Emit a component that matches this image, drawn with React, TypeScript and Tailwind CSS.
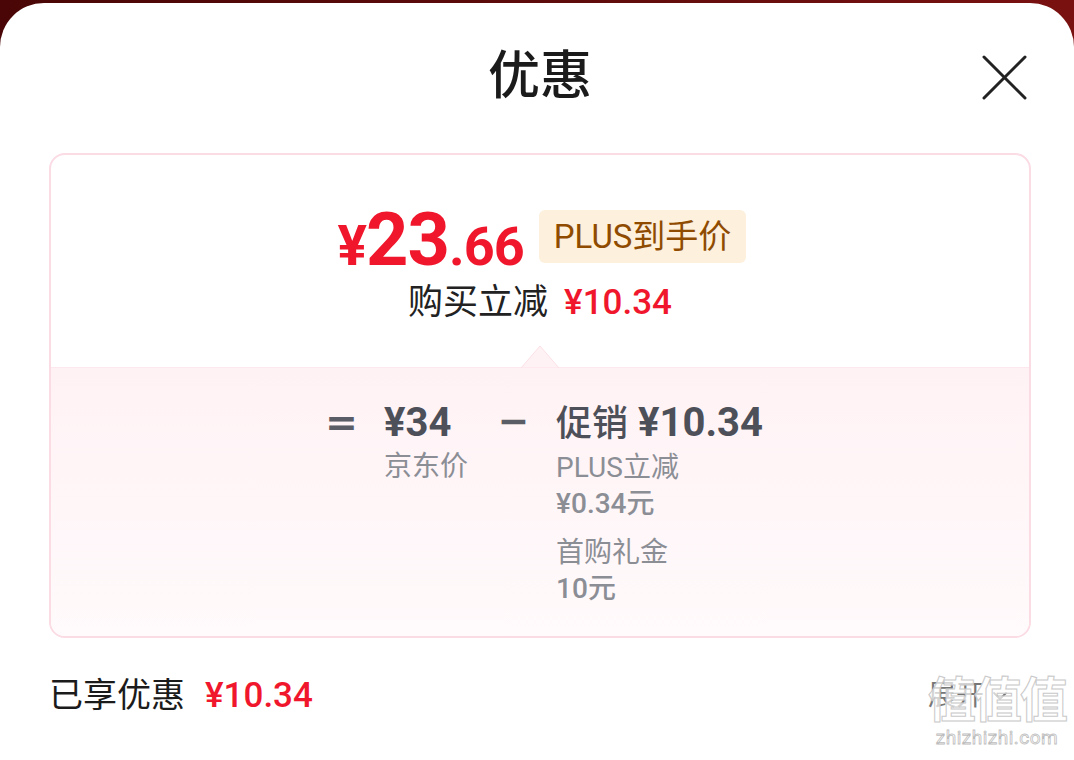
import { ChevronDown } from "lucide-react";

const FONT = "font-['Roboto','Noto_Sans_CJK_SC',sans-serif]";
const RED = "text-[#f0172d]";

function Operator({ children }: { children: string }) {
  return (
    <span className="w-[24px] h-[44px] flex items-center justify-center">
      <span className="inline-block scale-x-[1.4] text-[40px] leading-[44px] font-bold text-[#5a5d65]">{children}</span>
    </span>
  );
}

export default function App() {
  return (
    <div className={`w-[1074px] h-[760px] overflow-hidden bg-gradient-to-r from-[#4a0606] via-[#5e0b0b] to-[#7a1111] pt-[3px] ${FONT}`}>
      <div className="relative h-[757px] bg-white rounded-t-[44px] pl-[49px] pr-[43px]">
        {/* Header */}
        <header className="grid grid-cols-[1fr_auto_1fr] pt-[48px]">
          <div />
          <h1 className="text-[52px] leading-[52px] font-medium text-[#1b1b1b]">优惠</h1>
          <button className="justify-self-end self-start mt-[2px] mr-[3px]">
            <svg width="48" height="48" viewBox="0 0 48 48" fill="none" stroke="#222" strokeWidth="3" strokeLinecap="round">
              <path d="M4 4L45 45M45 4L4 45" />
            </svg>
          </button>
        </header>

        {/* Price card */}
        <div className="mt-[50px] border-2 border-[#fbdbe4] rounded-[16px] overflow-hidden">
          <div className="relative h-[212px] pt-[50px] flex flex-col items-center">
            <div className="flex items-start gap-[15px] ml-[4px]">
              <div className={`text-[74px] leading-[70px] font-bold tracking-[-1px] ${RED}`}>
                <span className="text-[55px]">¥</span>23<span className="text-[54px]">.66</span>
              </div>
              <div className="mt-[5px] h-[53px] px-[15px] rounded-[6px] bg-[#fdf0dc] flex items-center text-[33px] text-[#8f4b00]">
                PLUS到手价
              </div>
            </div>
            <div className="mt-[1px] text-[35px] leading-[40px] text-[#222]">
              购买立减<span className={`ml-[16px] font-medium ${RED}`}>¥10.34</span>
            </div>
            <svg className="absolute bottom-[-1px] left-1/2 -translate-x-1/2" width="38" height="23" viewBox="0 0 38 23">
              <polygon points="0,23 19,1 38,23" fill="#fff2f5" stroke="#fbe0e7" strokeWidth="1" />
            </svg>
          </div>

          <div className="border-t border-[#fde8ed] bg-gradient-to-b from-[#fff2f5] to-[#fffafb] pt-[33px] pb-[29px] pl-[12px] flex justify-center items-start text-[#4d5058]">
            <Operator>=</Operator>
            <div className="ml-[31px] flex flex-col">
              <span className="text-[40px] leading-[44px] font-bold">¥34</span>
              <span className="mt-[4px] text-[28px] leading-[36px] text-[#8b8e95]">京东价</span>
            </div>
            <span className="ml-[33px]">
              <Operator>−</Operator>
            </span>
            <div className="ml-[31px] flex flex-col">
              <span className="text-[40px] leading-[44px]">
                <span className="text-[36px] font-medium">促销</span> <span className="font-bold">¥10.34</span>
              </span>
              <div className="mt-[4px] flex flex-col text-[28px] leading-[36px] text-[#8b8e95]">
                <span>PLUS立减</span>
                <span className="font-medium">¥0.34元</span>
              </div>
              <div className="mt-[13px] flex flex-col text-[28px] leading-[36px] text-[#8b8e95]">
                <span>首购礼金</span>
                <span className="font-medium">10元</span>
              </div>
            </div>
          </div>
        </div>

        {/* Summary row */}
        <div className="mt-[37px] flex items-center justify-between">
          <div className="text-[34px] leading-[40px] text-[#1b1b1b]">
            已享优惠<span className={`ml-[20px] text-[35px] font-medium ${RED}`}>¥10.34</span>
          </div>
          <div className="mr-[19px] flex items-center gap-[4px] text-[28px] leading-[40px] text-[#777]">
            展开
            <ChevronDown className="w-[24px] h-[24px]" strokeWidth={1.8} />
          </div>
        </div>

        {/* watermark */}
        <div className="absolute right-[8px] top-[672px] flex flex-col items-center pointer-events-none">
          <span className="text-[48px] leading-[52px] font-bold text-white/70 [-webkit-text-stroke:1px_#c9c9c9] tracking-[-2px]">值值值</span>
          <span className="text-[19px] leading-[22px] text-white [-webkit-text-stroke:0.8px_#bdbdbd] tracking-[0.5px]">zhizhizhi.com</span>
        </div>
      </div>
    </div>
  );
}
